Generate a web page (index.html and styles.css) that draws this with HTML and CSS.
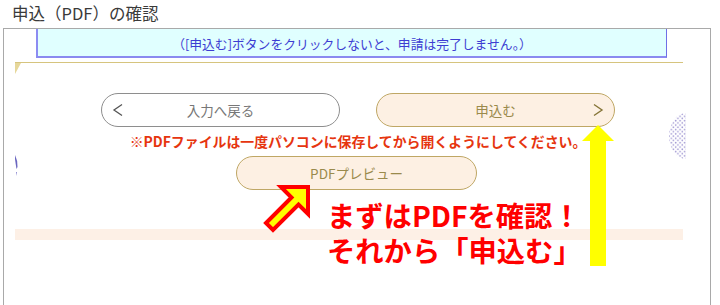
FILE: index.html
```html
<!DOCTYPE html>
<html lang="ja">
<head>
<meta charset="utf-8">
<title>申込（PDF）の確認</title>
<link rel="stylesheet" href="styles.css">
</head>
<body>
<h1 class="title">申込（PDF）の確認</h1>
<div class="frame">
  <div class="notice">（[申込む]ボタンをクリックしないと、申請は完了しません。）</div>
  <div class="panel">
    <svg class="deco-dots" width="18" height="46" viewBox="0 0 18 46">
      <defs>
        <pattern id="dots" width="4.4" height="4.4" patternUnits="userSpaceOnUse">
          <circle cx="1.1" cy="1.1" r="0.85" fill="#a59cd4"/>
          <circle cx="3.3" cy="3.3" r="0.85" fill="#a59cd4"/>
        </pattern>
      </defs>
      <ellipse cx="18" cy="23" rx="17" ry="23" fill="url(#dots)"/>
    </svg>
    <svg class="deco-mark" width="6" height="22" viewBox="0 0 6 22">
      <path d="M0 0 Q3 6 2.5 12 L1.5 14 Q0.5 8 0 4 Z" fill="#6a66c0"/>
      <path d="M1 17 L2 17 L1.6 21 Z" fill="#8a86d0"/>
    </svg>
    <div class="btn-row">
      <button class="btn btn-back" type="button">
        <svg class="chev" width="12" height="14" viewBox="0 0 12 14"><polyline points="10,1.5 2,7 10,12.5" fill="none" stroke="#555" stroke-width="1.3"/></svg>
        <span class="label">入力へ戻る</span>
        <span class="spacer"></span>
      </button>
      <button class="btn btn-submit" type="button">
        <span class="spacer"></span>
        <span class="label">申込む</span>
        <svg class="chev chev-right" width="12" height="14" viewBox="0 0 12 14"><polyline points="2,1.5 10,7 2,12.5" fill="none" stroke="#857436" stroke-width="1.4"/></svg>
      </button>
    </div>
    <p class="warning">※PDFファイルは一度パソコンに保存してから開くようにしてください。</p>
    <div class="preview-row">
      <button class="btn btn-preview" type="button"><span class="label">PDFプレビュー</span></button>
    </div>
    <div class="band"></div>
  </div>
</div>

<svg class="annot-arrows" width="720" height="305" viewBox="0 0 720 305">
  <polygon points="598,125 614,141 606,141 606,266 590,266 590,141 582,141" fill="#ffff00"/>
  <polygon points="308,187 281,187 291.5,197.5 266,223 273,230 298.5,204.5 308,214" fill="#ffff00" stroke="#ff0000" stroke-width="4" stroke-linejoin="miter"/>
</svg>
<div class="annot-text">
  <div class="annot-line">まずはPDFを確認！</div>
  <div class="annot-line">それから「申込む」</div>
</div>
</body>
</html>
```

FILE: styles.css
```css
html, body {
  margin: 0;
  padding: 0;
  background: #ffffff;
}
body {
  width: 720px;
  height: 305px;
  overflow: hidden;
  position: relative;
  font-family: "Noto Sans CJK JP", "Noto Sans", sans-serif;
}
.title {
  margin: 0;
  height: 28px;
  box-sizing: border-box;
  padding: 3px 0 0 12px;
  font-size: 16.5px;
  line-height: 21px;
  font-weight: normal;
  color: #3a3a3a;
}
.frame {
  margin-left: 3px;
  width: 708px;
  height: 278px;
  box-sizing: border-box;
  border: 1px solid #a9a9a9;
  position: relative;
  overflow: hidden;
}
.notice {
  margin-left: 32px;
  width: 631px;
  height: 29px;
  box-sizing: border-box;
  background: #e0ffff;
  border-left: 2px solid #8c8cf2;
  border-right: 1px solid #6f6fe6;
  border-bottom: 2px solid #8a8af0;
  display: flex;
  align-items: center;
  justify-content: center;
  padding-top: 1px;
  font-size: 12.8px;
  color: #3d3dd2;
}
.panel {
  margin: 4px 0 0 11px;
  width: 668px;
  border-top: 1px solid #d6c47e;
  padding-top: 30px;
  position: relative;
}
.panel::before {
  content: "";
  position: absolute;
  left: 0;
  top: 0;
  border-top: 11px solid #e6d79a;
  border-right: 6px solid transparent;
}
.deco-dots {
  position: absolute;
  left: 653px;
  top: 50px;
}
.deco-mark {
  position: absolute;
  left: 0;
  top: 92px;
}
.btn-row {
  display: flex;
  gap: 36px;
  padding-left: 86px;
}
.btn {
  height: 34px;
  width: 239px;
  box-sizing: border-box;
  border-radius: 17px;
  padding: 0 10px;
  margin: 0;
  display: grid;
  grid-template-columns: 1fr auto 1fr;
  align-items: center;
  font-family: inherit;
  font-size: 13.5px;
  cursor: pointer;
}
.btn .label {
  line-height: 20px;
}
.btn-back {
  background: #ffffff;
  border: 1px solid #8e8e8e;
  color: #777777;
}
.btn-back .chev {
  justify-self: start;
}
.btn-submit {
  background: #fdf0e3;
  border: 1px solid #bfa765;
  color: #9a8a4c;
}
.chev-right {
  justify-self: end;
}
.warning {
  margin: 4px 0 0;
  padding-left: 18px;
  text-align: center;
  font-size: 13.9px;
  line-height: 20px;
  font-weight: bold;
  color: #e6350f;
}
.preview-row {
  margin-top: 5px;
  padding-left: 221px;
  display: flex;
}
.btn-preview {
  width: 241px;
  background: #fdf0e3;
  border: 1px solid #bfa765;
  color: #9a8a4c;
  grid-template-columns: 1fr;
  justify-items: center;
}
.band {
  margin-top: 39px;
  height: 11px;
  background: #fdf0e6;
}
.annot-arrows {
  position: absolute;
  left: 0;
  top: 0;
  pointer-events: none;
}
.annot-text {
  position: absolute;
  left: 327px;
  top: 197px;
  font-size: 28.3px;
  font-weight: bold;
  color: #ff0000;
  white-space: nowrap;
}
.annot-line {
  height: 35px;
  line-height: 35px;
}
```
